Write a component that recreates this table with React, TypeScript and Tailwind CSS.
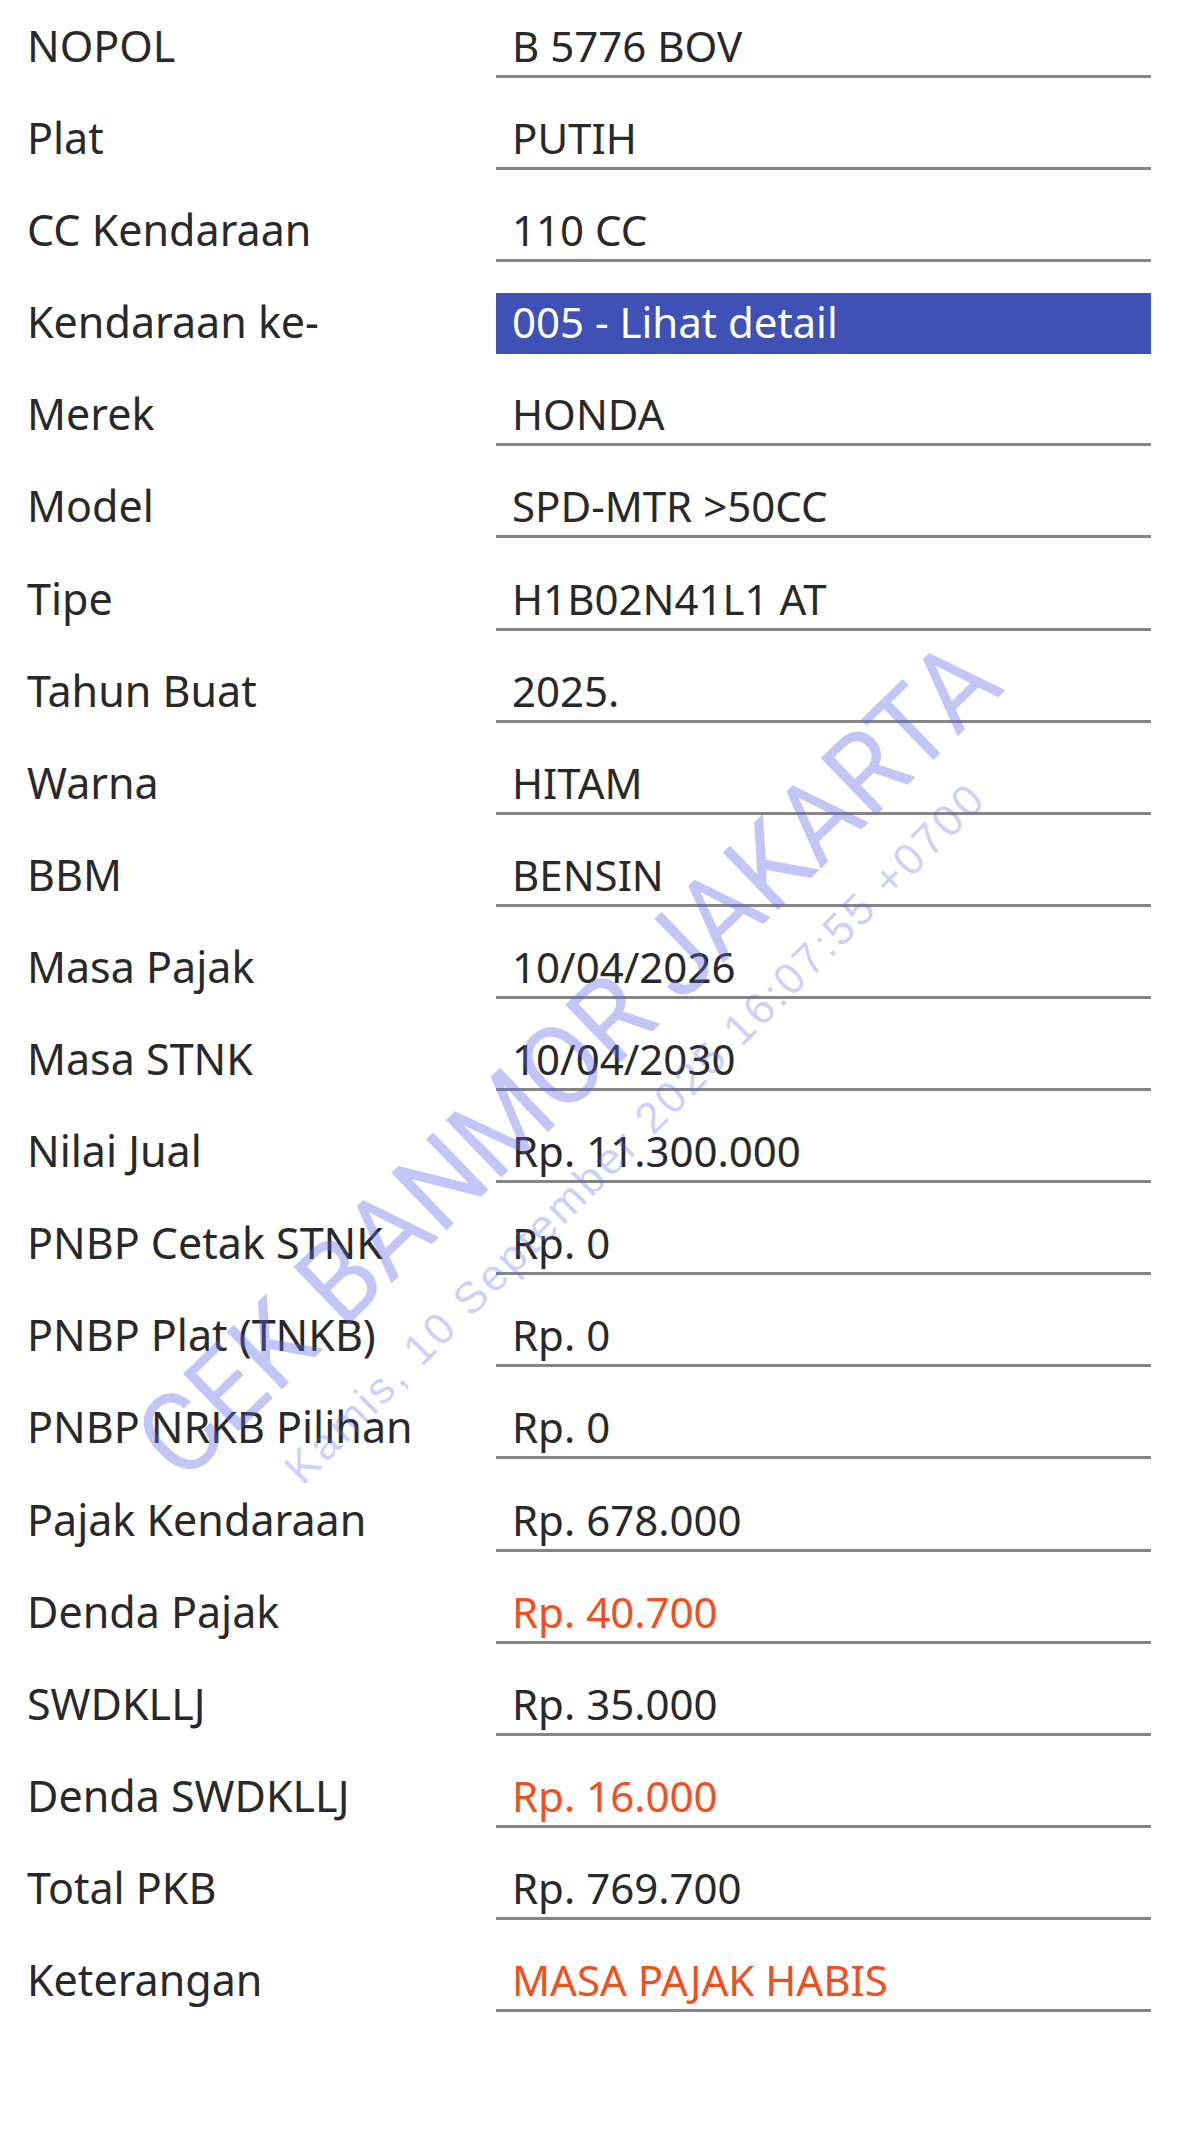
const rows: { label: string; value: string; tone?: "red" | "link" }[] = [
  { label: "NOPOL", value: "B 5776 BOV" },
  { label: "Plat", value: "PUTIH" },
  { label: "CC Kendaraan", value: "110 CC" },
  { label: "Kendaraan ke-", value: "005 - Lihat detail", tone: "link" },
  { label: "Merek", value: "HONDA" },
  { label: "Model", value: "SPD-MTR >50CC" },
  { label: "Tipe", value: "H1B02N41L1 AT" },
  { label: "Tahun Buat", value: "2025." },
  { label: "Warna", value: "HITAM" },
  { label: "BBM", value: "BENSIN" },
  { label: "Masa Pajak", value: "10/04/2026" },
  { label: "Masa STNK", value: "10/04/2030" },
  { label: "Nilai Jual", value: "Rp. 11.300.000" },
  { label: "PNBP Cetak STNK", value: "Rp. 0" },
  { label: "PNBP Plat (TNKB)", value: "Rp. 0" },
  { label: "PNBP NRKB Pilihan", value: "Rp. 0" },
  { label: "Pajak Kendaraan", value: "Rp. 678.000" },
  { label: "Denda Pajak", value: "Rp. 40.700", tone: "red" },
  { label: "SWDKLLJ", value: "Rp. 35.000" },
  { label: "Denda SWDKLLJ", value: "Rp. 16.000", tone: "red" },
  { label: "Total PKB", value: "Rp. 769.700" },
  { label: "Keterangan", value: "MASA PAJAK HABIS", tone: "red" },
];

const App = () => {
  return (
    <div className="relative min-h-[2141px] w-[1200px] overflow-hidden bg-white font-['Noto_Sans',sans-serif] text-[42px] text-[#292929]">
      <div className="flex flex-col gap-[31.1px] pt-[17px] pl-[27px] pr-[49px]">
        {rows.map((row, i) => (
          <div key={i} className="flex items-end">
            <div className="w-[469px] shrink-0 text-[43px] leading-none pb-[11px] whitespace-nowrap">{row.label}</div>
            {row.tone === "link" ? (
              <div className="flex h-[61px] flex-1 items-end border-b-[3px] border-[#3f51b5] bg-[#3f51b5] pl-[16px] pb-[8px] leading-none text-white whitespace-nowrap">
                {row.value}
              </div>
            ) : (
              <div
                className={
                  "flex h-[61px] flex-1 items-end border-b-[3px] border-[#858585] pl-[16px] pb-[8px] leading-none whitespace-nowrap " +
                  (row.tone === "red" ? "text-[#f0501e]" : "")
                }
              >
                {row.value}
              </div>
            )}
          </div>
        ))}
      </div>

      {/* watermark */}
      <div className="pointer-events-none absolute inset-0">
        <div className="absolute left-[568px] top-[1060px] -translate-x-1/2 -translate-y-1/2 -rotate-[44deg] scale-x-[0.95] whitespace-nowrap font-['Roboto',sans-serif] font-normal text-[112px] leading-none text-[rgba(95,105,235,0.38)]">
          CEK BANMOR JAKARTA
        </div>
        <div className="absolute left-[635px] top-[1133px] -translate-x-1/2 -translate-y-1/2 -rotate-45 whitespace-nowrap font-['Liberation_Sans',sans-serif] text-[44px] tracking-[3px] leading-none text-[rgba(95,105,235,0.32)]">
          Kamis, 10 September 2025 16:07:55 +0700
        </div>
      </div>
    </div>
  );
};

export default App;
